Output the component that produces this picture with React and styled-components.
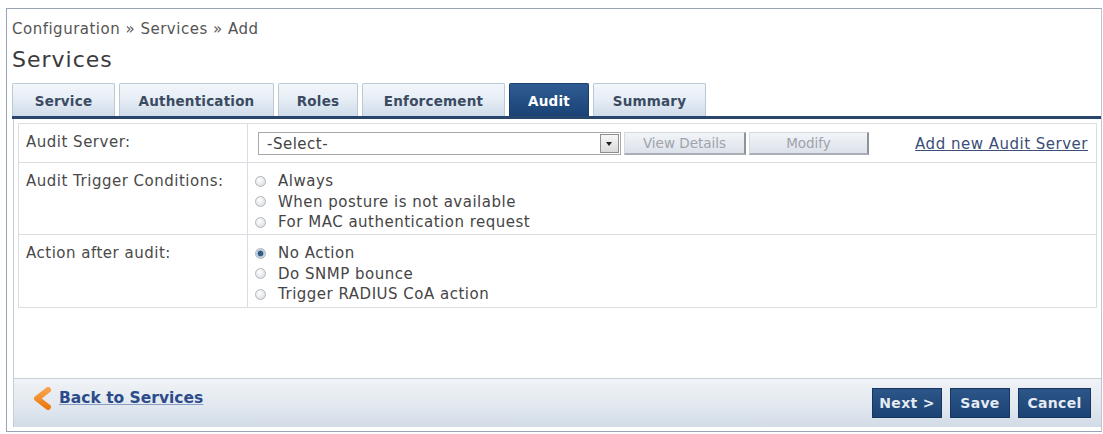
import React from "react";
import styled, { createGlobalStyle } from "styled-components";

const GlobalStyle = createGlobalStyle`
  html, body {
    margin: 0;
    padding: 0;
    background: #ffffff;
  }
  body {
    font-family: "DejaVu Sans", Verdana, sans-serif;
    color: #444;
  }
`;

const tabs = [
  { name: "Service", w: 103 },
  { name: "Authentication", w: 155 },
  { name: "Roles", w: 80 },
  { name: "Enforcement", w: 143 },
  { name: "Audit", w: 80, active: true },
  { name: "Summary", w: 113 },
];

const triggers = [
  { label: "Always" },
  { label: "When posture is not available" },
  { label: "For MAC authentication request" },
];

const actions = [
  { label: "No Action", checked: true },
  { label: "Do SNMP bounce" },
  { label: "Trigger RADIUS CoA action" },
];

const App = () => {
  return (
    <>
      <GlobalStyle />
      <Frame>
        <Crumbs>Configuration » Services » Add</Crumbs>
        <Title>Services</Title>
        <TabBar>
          {tabs.map((t) => (
            <Tab key={t.name} $active={t.active} $w={t.w}>
              {t.name}
            </Tab>
          ))}
        </TabBar>
        <Panel>
          <Form>
            <Row $h={39}>
              <Label>Audit Server:</Label>
              <Field>
                <ServerLine>
                  <Select>
                    <span>-Select-</span>
                    <Arrow />
                  </Select>
                  <GreyButton $w={122}>View Details</GreyButton>
                  <GreyButton $w={120}>Modify</GreyButton>
                  <AddLink href="#">Add new Audit Server</AddLink>
                </ServerLine>
              </Field>
            </Row>
            <Row $h={72}>
              <Label>Audit Trigger Conditions:</Label>
              <Field>
                <Radios>
                  {triggers.map((o) => (
                    <Option key={o.label}>
                      <Radio $checked={o.checked} />
                      {o.label}
                    </Option>
                  ))}
                </Radios>
              </Field>
            </Row>
            <Row $h={73} $last>
              <Label>Action after audit:</Label>
              <Field>
                <Radios>
                  {actions.map((o) => (
                    <Option key={o.label}>
                      <Radio $checked={o.checked} />
                      {o.label}
                    </Option>
                  ))}
                </Radios>
              </Field>
            </Row>
          </Form>
        </Panel>
        <Footer>
          <Back href="#">
            <svg width="24" height="23" viewBox="0 0 24 23">
              <defs>
                <linearGradient id="chev" x1="0" y1="0" x2="0" y2="1">
                  <stop offset="0" stopColor="#f7a14a" />
                  <stop offset="1" stopColor="#ec7a12" />
                </linearGradient>
              </defs>
              <polyline
                points="18,3 7,11.5 18,20"
                fill="none"
                stroke="url(#chev)"
                strokeWidth="6"
                strokeLinejoin="round"
                strokeLinecap="round"
              />
            </svg>
            <span>Back to Services</span>
          </Back>
          <Actions>
            <BlueButton $w={70}>Next &gt;</BlueButton>
            <BlueButton $w={60}>Save</BlueButton>
            <BlueButton $w={73}>Cancel</BlueButton>
          </Actions>
        </Footer>
      </Frame>
    </>
  );
};

const Frame = styled.div`
  margin: 8px 1px 0 6px;
  height: 424px;
  border: 1px solid #98a4b3;
  border-right-color: #bcc5d0;
  display: flex;
  flex-direction: column;
  box-sizing: border-box;
`;

const Crumbs = styled.div`
  margin: 11px 0 0 5px;
  font-size: 15px;
  line-height: 18px;
  letter-spacing: 0.5px;
  color: #555;
`;

const Title = styled.div`
  margin: 9px 0 0 5px;
  font-size: 22px;
  line-height: 26px;
  letter-spacing: 1px;
  color: #3a3a3a;
`;

const TabBar = styled.div`
  display: flex;
  gap: 4px;
  margin: 10px 0 0 5px;
  border-bottom: 3px solid #28466c;
  height: 33px;
`;

const Tab = styled.div`
  width: ${(p) => p.$w}px;
  box-sizing: border-box;
  display: flex;
  align-items: center;
  justify-content: center;
  padding-top: 2px;
  font-size: 13.5px;
  font-weight: bold;
  letter-spacing: 0.2px;
  border: 1px solid ${(p) => (p.$active ? "#1b3f6c" : "#bac8d8")};
  border-bottom: none;
  border-radius: 2px 2px 0 0;
  color: ${(p) => (p.$active ? "#ffffff" : "#3b4b62")};
  background: ${(p) =>
    p.$active
      ? "linear-gradient(#2f5c93, #1a4275)"
      : "linear-gradient(#f3f6fa 0%, #e7eef6 45%, #d0dcea 100%)"};
`;

const Panel = styled.div`
  flex: 1;
  margin-left: 6px;
  border-left: 1px solid #c5cdd8;
  padding: 4px 4px 0 4px;
`;

const Form = styled.div`
  border: 1px solid #dadee3;
  border-top: none;
`;

const Row = styled.div`
  display: grid;
  grid-template-columns: 229px 1fr;
  height: ${(p) => p.$h}px;
  border-top: 1px solid #dadee3;
  box-sizing: border-box;
`;

const Label = styled.div`
  padding: 8px 0 0 7px;
  font-size: 15px;
  line-height: 20px;
  letter-spacing: 0.5px;
  color: #4a4a4a;
  border-right: 1px solid #dadee3;
`;

const Field = styled.div`
  padding: 8px 8px 0 7px;
`;

const ServerLine = styled.div`
  display: flex;
  align-items: center;
  gap: 3px;
  padding-left: 3px;
`;

const Select = styled.div`
  width: 363px;
  height: 23px;
  box-sizing: border-box;
  border: 1px solid #a8a8a8;
  display: flex;
  align-items: center;
  justify-content: space-between;
  padding: 0 1px 0 8px;
  font-size: 15px;
  letter-spacing: 0.5px;
  color: #444;
`;

const Arrow = styled.span`
  width: 19px;
  height: 19px;
  box-sizing: border-box;
  border: 1px solid #8e8e8e;
  background: linear-gradient(#f6f6f6, #dadada);
  position: relative;
  &::after {
    content: "";
    position: absolute;
    left: 5px;
    top: 7px;
    border-left: 3.5px solid transparent;
    border-right: 3.5px solid transparent;
    border-top: 4px solid #1e1e1e;
  }
`;

const GreyButton = styled.div`
  width: ${(p) => p.$w}px;
  height: 23px;
  box-sizing: border-box;
  display: flex;
  align-items: center;
  justify-content: center;
  font-size: 13.5px;
  color: #9ea3aa;
  background: linear-gradient(#f2f4f8, #dce2ea);
  border: 1px solid #d5dae0;
  border-right: 2px solid #8e949b;
  border-bottom: 2px solid #a9afb6;
`;

const AddLink = styled.a`
  margin-left: auto;
  font-size: 15px;
  letter-spacing: 0.5px;
  color: #3b4e78;
  text-decoration: underline;
`;

const Radios = styled.div`
  display: flex;
  flex-direction: column;
`;

const Option = styled.label`
  display: flex;
  align-items: center;
  gap: 12px;
  height: 20.5px;
  font-size: 15px;
  letter-spacing: 0.5px;
  color: #454545;
`;

const Radio = styled.span`
  width: 11px;
  height: 11px;
  border-radius: 50%;
  box-sizing: border-box;
  border: 1px solid #b2b7bd;
  background: ${(p) =>
    p.$checked
      ? "radial-gradient(circle, #345a88 0 2.5px, #b8c9dc 3.2px, #eef2f6 100%)"
      : "radial-gradient(circle at 40% 35%, #ffffff, #d3d7dc)"};
`;

const Footer = styled.div`
  margin: 0 0 4px 6px;
  height: 49px;
  box-sizing: border-box;
  border-top: 1px solid #c6ced8;
  border-left: 1px solid #c5cdd8;
  background: linear-gradient(#f0f3f7 0%, #e2e8ef 55%, #d2dce7 100%);
  display: flex;
  align-items: center;
  justify-content: space-between;
  padding: 0 10px 0 16px;
`;

const Back = styled.a`
  display: flex;
  align-items: center;
  gap: 5px;
  margin-top: -10px;
  font-size: 15.5px;
  font-weight: bold;
  color: #2c4b8a;
  text-decoration: underline;
  text-decoration-color: #8a9cc0;
`;

const Actions = styled.div`
  display: flex;
  gap: 8px;
`;

const BlueButton = styled.div`
  width: ${(p) => p.$w}px;
  height: 30px;
  box-sizing: border-box;
  display: flex;
  align-items: center;
  justify-content: center;
  font-size: 14px;
  font-weight: bold;
  letter-spacing: 0.3px;
  color: #e4ebf4;
  background: linear-gradient(#2c5689, #1c4373);
  border: 1px solid #163560;
`;

export default App;
